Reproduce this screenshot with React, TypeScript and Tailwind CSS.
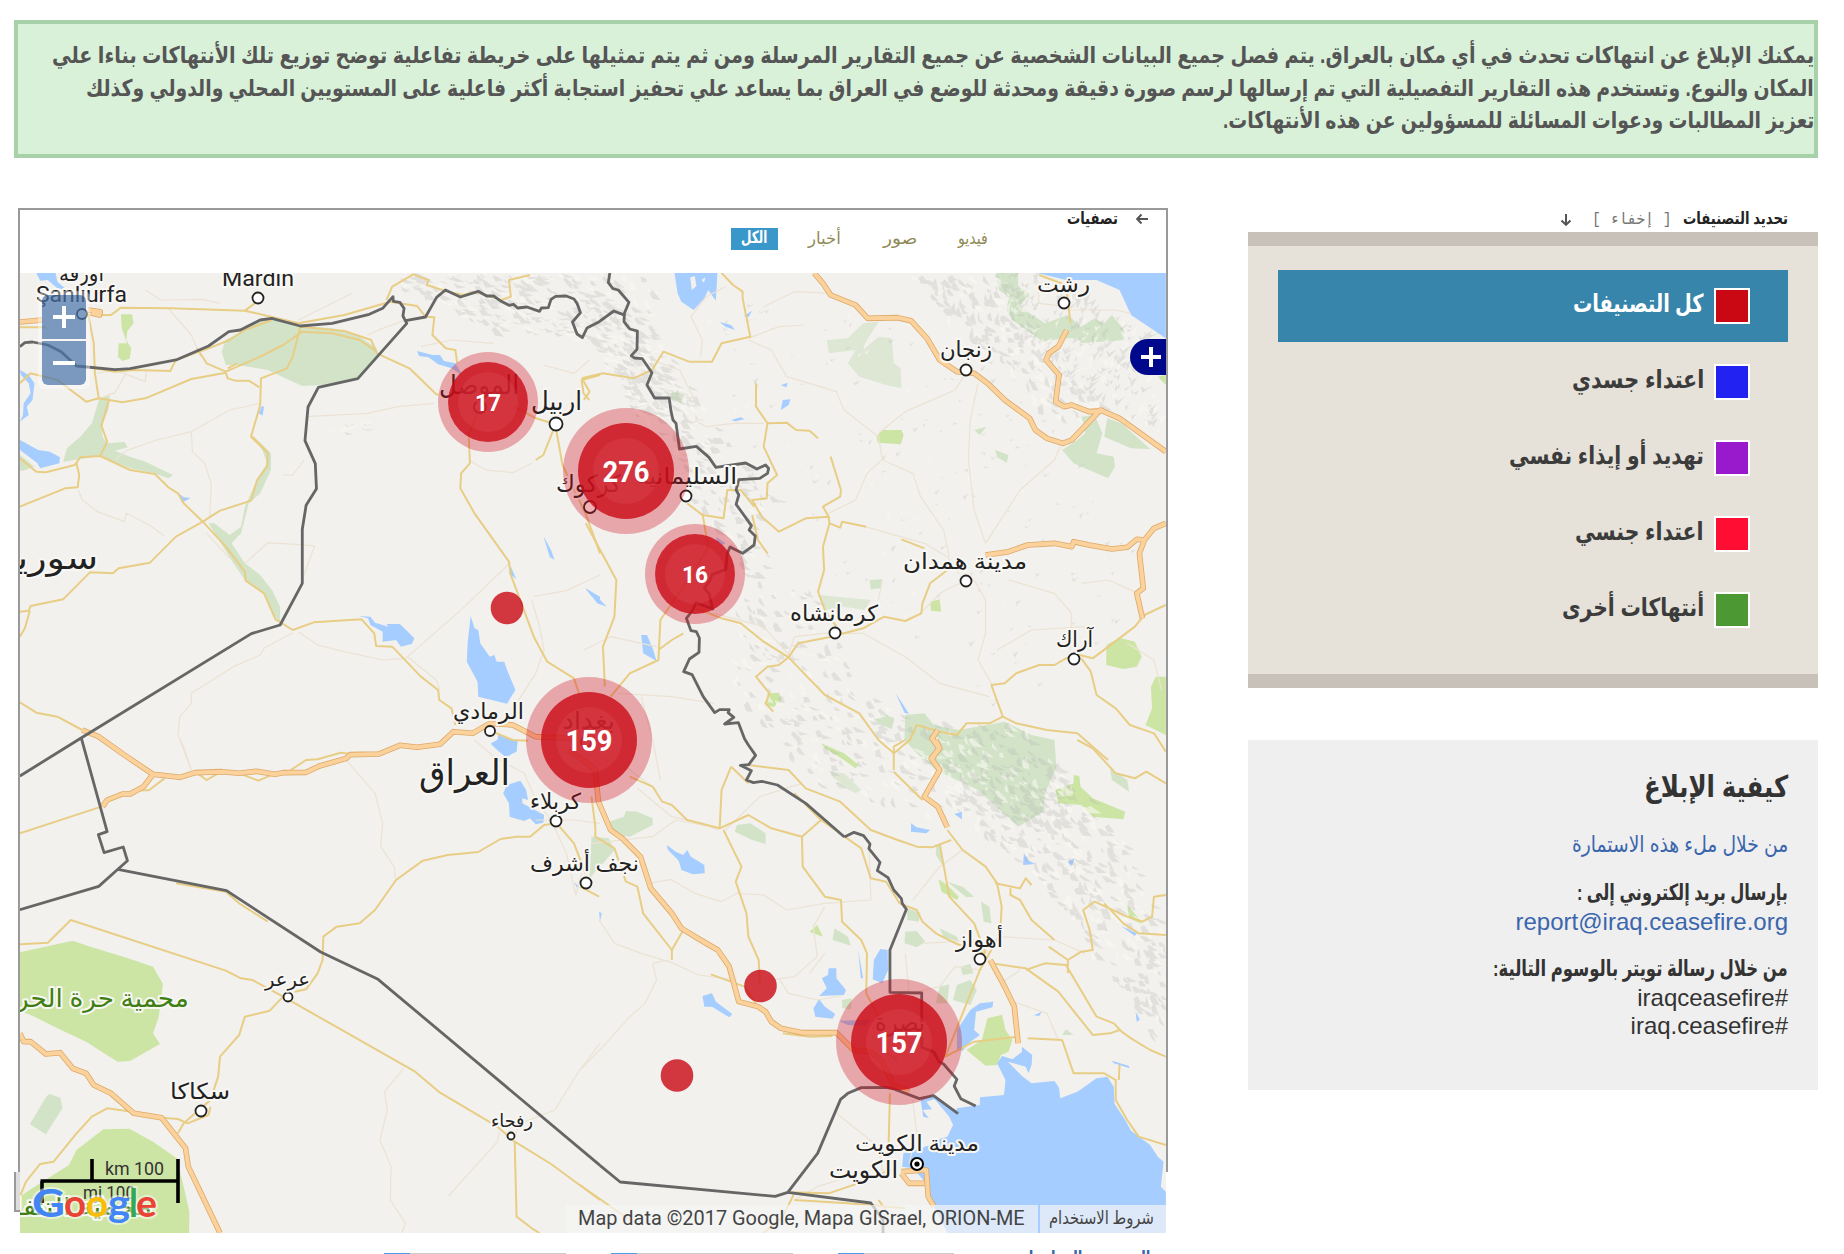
import { useLayoutEffect, useRef, useState } from "react";
import type { ReactNode } from "react";

type Quad = "a" | "b" | "c" | "d";

// The map is surveyed in four quadrants, each with its own local grid.
const frames: Record<Quad, string> = {
  a: "translate(0 260) scale(0.38265 0.33333)",
  b: "translate(580 260) scale(0.38265 0.33333)",
  c: "translate(0 740) scale(0.38265 0.33333)",
  d: "translate(580 740) scale(0.38265 0.33333)",
};

const FOREST = "#d2e3c8";
const PARK = "#cce5a5";
const WATER = "#a5cdff";

const areas: [Quad, string, string][] = [
  ["a", FOREST, "M710 176L785 198L870 205L940 230L985 265L985 290L935 356L850 374L790 378L740 352L700 330L620 315L590 315L579 275L590 240L640 208L680 182Z"],
  ["a", FOREST, "M260 415L287 406L283 450L265 500L268 530L280 550L325 546L334 562L300 572L340 590L380 605L452 645L440 655L400 638L340 625L300 606L262 588L205 598L165 606L175 565L210 530L240 490Z"],
  ["a", FOREST, "M678 545L708 580L708 630L680 700L650 730L630 820L605 850L640 910L680 945L712 992L732 1040L732 1085L712 1062L690 1000L640 960L610 910L545 790L560 790L600 825L630 800L640 740L675 650L698 610Z"],
  ["a", PARK, "M316 163L345 163L349 190L333 213L330 240L343 265L339 296L320 303L308 290L310 250L332 250L318 205Z"],
  ["a", FOREST, "M52 585L90 620L60 632L52 632Z"],
  ["a", WATER, "M95 39L145 39L150 65L175 90L150 85L125 60L105 62Z"],
  ["a", WATER, "M52 330L75 345L90 370L85 420L70 440L75 465L52 485L60 465L62 430L80 400L75 370L55 345Z"],
  ["a", WATER, "M52 540L100 570L130 575L157 592L155 610L105 625L98 610L52 570Z"],
  ["a", WATER, "M1090 273L1130 285L1150 285L1160 303L1190 310L1208 345L1180 325L1145 313L1120 292L1095 288Z"],
  ["a", WATER, "M1230 1068L1240 1105L1250 1110L1255 1150L1280 1190L1292 1185L1298 1205L1318 1205L1325 1230L1347 1290L1325 1331L1250 1310L1248 1265L1220 1205L1222 1150Z"],
  ["a", WATER, "M937 1068L968 1070L980 1088L1015 1100L1010 1092L1045 1092L1083 1135L1076 1152L1048 1160L1035 1140L1000 1145L1000 1115L968 1095L962 1075Z"],
  ["a", WATER, "M1283 1450L1300 1440L1303 1420L1325 1435L1352 1440L1350 1475L1320 1490L1290 1460Z"],
  ["a", WATER, "M1420 828L1440 870L1449 899L1437 892Z"],
  ["a", WATER, "M1335 920L1349 957L1330 940Z"],
  ["a", WATER, "M684 438L690 440L686 467L676 460Z"],
  ["a", WATER, "M467 700L480 712L498 714L475 728Z"],
  ["a", WATER, "M1530 985L1568 1010L1568 1020L1545 1008Z"],
  ["b", WATER, "M247 39L359 39L355 122L335 90L325 115L297 150L265 125L255 100Z"],
  ["b", "#f2f1ed", "M288 52L300 48L304 78L292 90ZM318 60L328 52L324 68Z"],
  ["b", WATER, "M1195 39L1270 60L1350 60L1410 90L1440 165L1531 235L1531 39Z"],
  ["b", FOREST, "M1087 39L1145 39L1145 80L1175 100L1150 140L1215 190L1275 165L1310 200L1345 175L1370 190L1390 165L1422 210L1420 240L1310 250L1300 235L1260 235L1210 245L1130 180L1115 150L1120 110L1095 90Z"],
  ["b", "#dde7d4", "M645 240L700 235L740 190L780 185L745 250L740 270L780 230L815 235L820 310L838 325L840 385L800 375L730 350L700 310L720 270L650 280Z"],
  ["b", PARK, "M790 510L840 510L846 525L838 553L778 548L775 530Z"],
  ["b", FOREST, "M1310 470L1345 465L1365 520L1350 580L1395 590L1398 620L1380 655L1290 610L1260 570L1300 540L1320 520Z"],
  ["b", FOREST, "M1378 475L1415 490L1490 567L1440 565L1370 530Z"],
  ["b", FOREST, "M240 390L270 405L265 430L235 415Z"],
  ["b", FOREST, "M1085 570L1120 585L1115 608L1090 592Z"],
  ["b", FOREST, "M1030 510L1062 500L1045 525Z"],
  ["b", FOREST, "M757 960L790 958L785 985L760 988Z"],
  ["b", PARK, "M915 1025L940 1018L944 1055L917 1052Z"],
  ["b", "#dde7d4", "M625 1005L760 1020L745 1050L690 1040L640 1050Z"],
  ["b", PARK, "M1376 1155L1410 1133L1450 1145L1468 1190L1455 1220L1420 1227L1375 1215Z"],
  ["b", PARK, "M1492 1280L1505 1250L1531 1250L1531 1425L1478 1395L1495 1345Z"],
  ["b", PARK, "M490 1300L520 1298L527 1320L505 1342L488 1335Z"],
  ["b", FOREST, "M850 1365L900 1360L925 1395L990 1410L1110 1385L1180 1425L1240 1440L1245 1520L1215 1600L1210 1655L1145 1700L1040 1590L930 1530L880 1480L848 1440Z"],
  ["b", FOREST, "M765 1380L800 1365L822 1375L815 1408L790 1395Z"],
  ["b", WATER, "M825 1300L842 1330L860 1362L848 1358Z"],
  ["b", WATER, "M160 1125L175 1125L190 1165L200 1203L165 1180Z"],
  ["b", WATER, "M530 420L550 418L545 435L525 450Z"],
  ["b", WATER, "M365 186L395 195L405 210L380 200Z"],
  ["b", WATER, "M395 480L420 472L430 478L405 484Z"],
  ["b", WATER, "M525 376L542 368L540 382Z"],
  ["b", WATER, "M15 985L40 1005L70 1040L45 1030Z"],
  ["b", WATER, "M428 168L450 152L440 172Z"],
  ["b", PARK, "M1510 350L1531 345L1531 375Z"],
  ["b", WATER, "M355 830L380 850L372 855L360 845Z"],
  ["c", PARK, "M52 637L190 602L230 618L335 655L400 680L426 732L415 830L400 880L418 912L340 963L307 965L225 905L150 865L90 830L52 812Z"],
  ["c", PARK, "M90 1340L180 1275L200 1230L270 1168L338 1166L400 1205L462 1255L480 1340L495 1415L494 1479L52 1479L52 1370Z"],
  ["c", FOREST, "M120 1072L128 1062L158 1073L163 1105L120 1183L78 1153Z"],
  ["c", WATER, "M1283 13L1300 0L1330 0L1353 5L1350 30L1330 48L1310 25Z"],
  ["c", WATER, "M1315 160L1325 135L1360 122L1375 150L1380 180L1365 175L1365 190L1422 225L1420 248L1400 253L1385 235L1370 243L1332 230L1330 190Z"],
  ["c", WATER, "M1500 425L1513 440L1508 443Z"],
  ["d", FOREST, "M30 290L75 295L90 330L60 370L25 415Z"],
  ["d", FOREST, "M75 245L115 230L120 213L150 215L190 235L190 255L130 290L90 285Z"],
  ["d", FOREST, "M410 255L445 250L485 280L485 312L450 300L405 275Z"],
  ["d", "#dde7d4", "M655 95L690 100L735 150L720 160L670 130Z"],
  ["d", PARK, "M630 10L690 40L728 75L720 85L690 60L640 25Z"],
  ["d", PARK, "M1242 150L1290 130L1290 105L1305 108L1308 140L1340 175L1425 215L1420 238L1340 230L1310 195L1250 190Z"],
  ["d", PARK, "M937 418L960 435L990 470L985 480L945 455Z"],
  ["d", PARK, "M1430 495L1460 535L1468 552L1435 535Z"],
  ["d", PARK, "M600 575L620 555L635 590Z"],
  ["d", PARK, "M1065 835L1103 824L1112 870L1130 900L1120 935L1100 945L1090 975L1060 977L1010 930L1050 900Z"],
  ["d", FOREST, "M855 505L890 520L885 545L855 540Z"],
  ["d", FOREST, "M850 575L880 573L902 605L880 622L848 610Z"],
  ["d", FOREST, "M960 425L1000 440L1030 470L1010 472Z"],
  ["d", FOREST, "M1048 485L1070 500L1075 550L1055 545Z"],
  ["d", FOREST, "M940 565L985 590L990 605L950 590Z"],
  ["d", FOREST, "M995 680L1020 672L1028 700L1000 705Z"],
  ["d", FOREST, "M940 740L965 733L960 790L930 790Z"],
  ["d", FOREST, "M985 735L1020 720L1037 750L1020 795L975 780Z"],
  ["d", FOREST, "M930 315L940 315L950 380L930 345Z"],
  ["d", FOREST, "M665 565L700 590L708 617L660 600Z"],
  ["d", FOREST, "M685 780L710 775L708 808L685 805Z"],
  ["d", FOREST, "M1385 85L1430 120L1435 155L1390 120Z"],
  ["d", FOREST, "M1260 885L1270 868L1290 885Z"],
  ["d", WATER, "M227 315L250 335L270 345L280 330L290 350L325 375L326 400L295 403L265 390L258 362L230 330Z"],
  ["d", WATER, "M768 660L785 627L804 630L805 690L790 730L765 718Z"],
  ["d", WATER, "M650 685L670 685L670 715L695 750L690 765L625 768L645 745L632 715L648 705Z"],
  ["d", WATER, "M610 805L625 778L640 800L667 822L660 836L615 830Z"],
  ["d", WATER, "M675 842L760 840L745 858L700 855Z"],
  ["d", WATER, "M320 768L345 760L355 785L398 822L390 832L345 800L325 800Z"],
  ["d", WATER, "M727 630L733 670L740 715L734 715Z"],
  ["d", WATER, "M985 930L985 870L1020 810L1045 790L1080 785L1078 802L1035 815L1030 870L1045 885L1020 905L1000 932Z"],
  ["d", WATER, "M865 250L880 262L915 270L905 280L865 275Z"],
  ["d", WATER, "M978 222L998 215L998 238Z"],
  ["d", WATER, "M1160 340L1172 362L1190 372L1158 375Z"],
  ["d", WATER, "M1275 365L1292 355L1285 382Z"],
  ["d", WATER, "M1186 826L1207 815L1200 828Z"],
  ["d", WATER, "M1414 558L1455 580L1450 588Z"],
  ["d", WATER, "M1390 962L1435 978L1435 984L1395 970Z"],
  ["d", WATER, "M1452 815L1463 838L1455 846Z"],
  ["d", WATER, "M50 515L57 520L52 545Z"],
  ["d", WATER, "M984 1105L1045 1095L1045 1072L1108 1065L1112 1020L1090 970L1103 948L1130 958L1155 935L1155 920L1182 945L1180 975L1172 1000L1165 980L1118 965L1155 1008L1180 1030L1240 1023L1252 1043L1255 1075L1300 1055L1350 1015L1378 1010L1395 1040L1397 1092L1425 1140L1440 1172L1490 1215L1510 1250L1525 1265L1518 1340L1531 1355L1531 1479L960 1479L925 1400L905 1330L870 1285L842 1280L845 1240L890 1225L915 1215L930 1200L960 1190L975 1155L965 1130L925 1075L985 1112Z"],
  ["d", WATER, "M890 1080L920 1062L940 1085L985 1120L925 1078L905 1085L920 1108L895 1110L912 1135L897 1130Z"],
];

const minor: [Quad, string][] = [
  ["a", "M440 145L500 225L515 265L525 290M255 340L300 330L380 365L382 335M255 418L300 398L330 340M680 430L600 450L500 515L410 540L330 572L300 600M500 515L503 575L535 610L552 670L548 770M205 690L215 720L255 755L325 785L330 760L390 795L430 828M540 820L600 895M640 910L700 848L810 856L822 858L795 945M740 645L765 645L795 600M800 470L960 460L1040 440L1135 430"],
  ["a", "M1330 912L1200 1055L1060 1195L1000 1200L900 1175L830 1155L780 1115M765 1118L690 1165L680 1185L610 1220L500 1300L500 1330L470 1370L465 1425L480 1460L500 1530M1395 1010L1480 992L1568 945M1390 1020L1410 1100L1422 1170L1400 1240L1350 1330M1065 1190L1140 1260L1150 1290M1225 600L1270 630L1340 638L1390 610M660 40L655 70L700 55M380 90L420 120L530 118L575 130M920 100L850 140L780 180M1060 180L1000 205L960 225M1100 260L1180 240L1290 250M1420 315L1500 340L1540 300"],
  ["b", "M380 80L330 110L290 170L320 240L315 290M440 235L520 200L585 195M440 240L500 270L540 350L600 370L670 395L690 450L780 530L790 598L750 640L720 720L650 760M790 600L870 640L890 710L950 810L965 890M1008 340L980 390L900 430L850 455L780 520M1040 370L1020 480L1015 600L1030 750L1060 850M1260 545L1240 600L1150 690L1060 850M745 800L900 850L960 890L990 940M1030 960L1060 1020L1060 1120L1040 1200L1080 1280M1010 960L940 1000L890 1060M790 960L780 1020M660 100L560 95L480 140M1280 1170L1285 1060L1240 1000L1120 960M550 1190L480 1100L350 1060M540 1200L560 1130L640 1120L740 1120L850 1190L940 1270L1070 1310"],
  ["b", "M1195 60L1200 130L1270 140M1270 150L1400 150L1440 160M10 1170L80 1130L200 1160M100 1300L240 1310L350 1330M160 1310L190 1440L210 1560M1090 1170L1180 1110L1320 1100M1430 1150L1500 1200L1520 1290M1310 970L1380 960L1460 1000M300 480L330 500L400 490L480 490M190 300L260 330L300 420"],
  ["c", "M470 0L500 90M905 60L980 160L1000 250L995 320L1030 380L1034 415M1055 985L1005 1055L1012 1110L993 1200L1022 1280L1020 1380L1060 1450L1050 1479M1305 1175L1300 1205L1172 1368M1345 1190L1360 1150L1450 1110L1515 990L1568 910M1240 0L1290 50L1370 100L1400 180L1440 240L1480 340L1505 465L1520 400M1400 240L1500 240L1568 250"],
  ["d", "M0 990L60 920L130 830L170 790L200 720L190 670L230 660M50 540L90 610L160 640L240 668L310 705L410 720M30 310L190 290L250 240L340 260M380 270L470 170L580 130M360 270L320 250L240 230L150 145M240 420L300 460L370 485L410 460L480 465L540 510L640 490L760 480L755 300M180 430L240 418M640 500L610 560L620 650L560 710L500 720M520 715L545 760L620 780L680 768M870 480L940 380L1000 330M900 610L1030 600L1070 640M850 640L860 760L940 740L980 680L1050 690M1150 690L1100 730L1120 780L1220 820L1250 900M1100 590L1240 600L1320 640M600 700L640 640M820 760L870 780L900 830M670 1120L780 1220L790 1290M870 1080L880 1180L860 1270M560 1380L620 1340L760 1290L820 1290M20 40L120 80L200 150"],
];

const roads: [Quad, string][] = [
  ["a", "M52 202L120 202M225 165L290 165L316 143L445 145L640 152L780 190L900 165L1020 125L1090 138L1112 170L1135 172L1130 225L1165 265L1190 270L1195 310M640 152L690 110M785 200L900 213L970 240L985 280L1070 325L1140 403L1175 408M1010 120L1025 80L1080 43L1120 60L1115 75L1170 95L1210 105L1240 95L1310 120L1335 110L1330 60L1385 45M230 160L245 250L248 340L258 415L225 425L150 360L80 340L52 370M460 298L445 333L350 330L300 335L225 320M710 180L640 210L600 240L545 265L460 300M515 265L540 310L590 335L680 290L740 255L790 215L868 220L940 240L985 275M258 415L320 427L380 415L500 357L590 338M785 200L765 290L750 325L682 355L680 435L656 530L700 580L698 620L672 660L656 722L575 752L530 785L460 830L392 908L310 925L295 940L235 937L165 1018L80 1038L75 1052L52 1055"],
  ["a", "M590 338L595 355L615 362L650 362L678 382M595 325L620 310M660 530L698 575M285 420L265 497L280 545L262 588L340 630L405 642L440 682L465 700L480 730L530 785L590 860L640 935L642 962L690 1000L720 1078L765 1110L820 1087L945 1078L978 1120L983 1158L1025 1160L1100 1250L1145 1290L1148 1320L1180 1345L1190 1395M262 588L210 592L195 615L120 637L95 635L52 595M200 610L207 645L203 682L170 685L52 740M78 1052L65 1105L52 1130M52 1327L95 1358L150 1370L215 1410M1245 470L1225 520L1228 610L1205 640L1203 685L1240 760L1330 905L1335 945L1395 1130L1430 1205L1500 1255L1513 1300M1345 440L1400 475L1452 493L1420 585L1400 600M1452 500L1470 615L1530 760L1568 880M1568 345L1520 360L1525 400L1540 420M1255 1400L1340 1440L1380 1442"],
  ["b", "M370 39L400 75L425 95L425 115L445 230L370 250L345 305L285 305L218 275L188 330L140 355L60 340L5 355M5 355L25 395L10 420M460 370L460 440L490 490L480 560L515 645L490 670L488 715L450 720L475 770L520 815L590 775L650 770L635 740L680 710L682 690L655 590M490 490L540 488L565 510L600 512L622 535M280 730L320 765L375 775L385 690L420 690L455 740M450 765L465 840L490 880M650 770L652 790L680 803L685 785L748 800M652 790L635 860L638 930L622 995L640 1050L670 1100M545 1192L570 1150L650 1132L740 1105L795 1070L850 1083L892 1060L895 1030L915 970L960 930M305 1045L370 1075L420 1090L480 1145L545 1192L640 1305L730 1360L780 1440L820 1480M545 1192L520 1215L490 1220L460 1250L495 1300L485 1330L505 1355"],
  ["b", "M15 790L95 960L90 1070L60 1160L65 1280M320 760L335 860L300 930L210 1080L205 1200L130 1240L80 1310M205 1170L240 1140L270 1120M840 838L900 865M1531 1035L1475 1065L1450 1100L1340 1195L1305 1185L1270 1195L1240 1215L1200 1215L1140 1240L1110 1270L1075 1275L1105 1370L1140 1390L1220 1410L1300 1420L1340 1460L1380 1500M1310 1195L1335 1235L1350 1305L1400 1345L1437 1395L1500 1420L1531 1475M1105 1370L1070 1390L1010 1390L985 1425L940 1415L880 1395L862 1440L820 1480M1200 45L1270 75L1282 190"],
  ["c", "M52 280L265 200M360 152L390 150L430 115M760 90L800 60L830 58L890 38L920 42M510 95L540 120L570 100L625 100L675 122L720 100M52 613L125 608L185 540L590 692L630 715L660 720L740 770L1085 995L1150 1058L1300 1160L1345 1205L1440 1272L1568 1380M770 755L800 748L830 700L843 660L845 590L880 560L940 550L980 510L1035 420L1105 362L1170 345L1250 336L1308 297L1350 290L1385 290L1422 255L1455 250M460 430L590 455L625 490L700 545M740 770L705 812L640 830L625 885L575 950L570 1010L550 1080L480 1150L465 1180M425 1133L465 1137L490 1150L545 1125L550 1100M1345 1205L1350 1430L1390 1465L1410 1479M52 1370L68 1325L105 1272L140 1265L200 1180L240 1130L280 1105L345 1115M1455 250L1500 310L1530 400"],
  ["d", "M0 440L50 470M0 1335L130 1440M30 170L40 260L40 290L90 325L120 425L150 440L165 520L240 630L240 660M240 630L270 570M395 80L370 150L365 265L280 240L240 195L215 185L190 140L130 110M395 80L440 130M440 75L545 90L590 145L680 185L760 270L830 300L880 320L920 322L970 300M365 265L440 225L500 265L580 290L630 240L560 160M375 270L422 380L407 425L435 520L440 590L467 660L470 730M580 290L582 380L640 470L682 480L685 545L735 600L750 640L748 760L780 830M630 240L735 325L760 415L800 425L835 490L880 510L895 545L930 580L985 612L1060 640M342 703L430 740L465 800M530 880L600 890L660 888M940 310L965 470L1030 550L1060 640M960 270L1000 330L1060 380L1090 430L1102 500L1098 580L1070 640L1045 690L955 950L1030 905L1145 890"],
  ["d", "M1085 430L1150 445L1165 415L1180 435M1125 445L1125 465L1150 480L1180 540L1240 600M820 90L820 20L850 0M820 95L895 180M1225 620L1275 660L1310 635L1340 630L1332 570L1315 510L1345 485L1430 530L1470 545L1495 530L1500 470L1531 465M1370 490L1420 550L1460 580L1531 585M1075 670L1165 685L1250 755L1340 885L1385 880L1410 870L1440 895L1490 930L1531 950M1165 690L1215 670L1270 675L1350 830L1395 850L1420 880M1275 660L1275 700M1170 895L1260 900L1290 1000L1370 1000L1400 1020L1400 1080L1430 1140L1460 1190L1531 1215M1410 975L1408 1020M1300 0L1340 25L1400 100L1450 115L1480 95L1531 130M790 930L830 960M810 1060L805 1280M545 1357L650 1360L740 1325L810 1290M560 1380L700 1390L850 1405M560 1360L530 1430L480 1479M780 1380L800 1410"],
];

const highways: [Quad, string][] = [
  ["a", "M52 186L110 180M230 150L262 155L260 165L240 160"],
  ["b", "M612 39L635 70L655 105L720 135L752 175L830 173L865 182L907 235L940 300L985 335L1030 340L1065 370L1110 420L1175 475L1190 510L1220 535L1262 550L1285 540L1360 450L1410 475L1531 575M1272 210L1250 260L1225 280L1218 300L1252 345L1243 425L1265 440L1285 435L1330 455L1370 452M1060 885L1120 875L1170 855L1240 850L1285 860L1290 845L1330 855L1390 867L1430 862L1455 838L1475 840L1500 805L1531 790M1475 840L1462 880L1472 985L1455 1000L1470 1075M935 1410L920 1435L938 1465L918 1500"],
  ["c", "M215 -30L258 -10L325 45L400 103L470 112L510 98L580 95L625 100L670 94L718 103L740 98L800 97L835 78L905 55L915 44L990 42L1045 16L1090 22L1150 13L1185 -25L1235 -20L1280 -50L1340 -45L1400 -10L1500 -5M400 103L375 140L340 162L320 162L280 180L268 200M52 880L62 905L80 905L120 942L157 938L190 985L225 1000L245 1035L290 1060L350 1120L422 1133L485 1225L492 1280L575 1479"],
  ["d", "M-30 30L20 70L40 90L48 185L80 270L110 295L158 350L185 445L240 520L265 565L315 600L360 630L390 680L415 785L465 800L485 815L500 845L525 865L580 878L670 878L715 930L760 935L790 965L820 1035L860 1055M930 0L940 25L918 55L940 90L900 170L935 200L960 262M1072 660L1110 740L1135 800L1145 910M840 1295L905 1290L910 1370L925 1400M840 1300L860 1330L900 1330"],
];

const borders: [Quad, string][] = [
  ["a", "M52 260L65 248L85 246L125 255L160 275L200 318L300 329L340 326L460 300L545 258L598 215L628 210L680 180L710 175L785 198L868 190L965 163L1000 145L1027 110L1028 124L1045 127L1056 145L1053 168L1063 190L935 356L832 382L805 441L797 542L824 611L827 686L800 736L790 808L790 970L732 1095L657 1121L212 1434L52 1548"],
  ["a", "M1060 182L1112 171L1141 112L1164 90L1203 111L1250 94L1272 108L1290 108L1310 124L1330 136L1342 133L1353 144L1377 141L1410 154L1415 144L1433 143L1440 118L1452 109L1480 108L1500 117L1508 130L1517 158L1496 186L1508 222L1522 233L1534 204L1566 185L1604 153L1634 166"],
  ["b", "M78 39L74 68L86 86L100 90L128 127L116 160L115 185L130 207L150 213L149 268L134 287L142 294L163 296L188 338L175 375L195 414L233 414L238 455L243 480L251 490L260 567L304 559L337 592L355 622L380 618L433 609L462 627L485 615L493 625L490 640L470 655L415 659L408 690L415 705L408 733L448 797L442 810L458 828L455 855L425 880L392 861L385 880L381 928L345 944L340 960L325 985L337 1000L347 1047L303 1028L295 1050L278 1075L290 1112L304 1115L312 1134L311 1177L286 1197L271 1235L293 1244L322 1310L352 1358L365 1349L390 1349L387 1358L402 1372L378 1392L414 1388L430 1436L440 1455L459 1486L441 1514L419 1516L448 1532L435 1560L453 1568L475 1564L516 1575L590 1630L691 1731"],
  ["c", "M212 -8L280 275L257 284L272 338L322 321L333 362L308 388L258 439L52 509M308 388L592 452L838 636L988 718L1568 1276"],
  ["d", "M691 291L716 277L741 287L758 312L755 326L784 367L777 392L805 413L820 450L840 476L842 490L853 508L810 630L810 757L893 759L893 922L925 936L938 965L950 972L985 1018L978 1038L995 1076L1034 1098M988 1121L924 1067L887 1076L820 1047L800 1042L735 1043L700 1060L681 1078L621 1240L543 1357L510 1369L105 1326L52 1276M543 1357L760 1389L792 1440L792 1479"],
];

// Mountain ranges: outline in map units, number of relief facets, ridge angle and facet size.
const ranges: { poly: [number, number][]; count: number; angle: number; size: number }[] = [
  { poly: [[395, 273], [590, 273], [690, 400], [640, 420], [590, 340], [500, 330], [400, 290]], count: 420, angle: 20, size: 1 },
  { poly: [[590, 273], [650, 273], [660, 340], [720, 430], [780, 500], [740, 560], [690, 500], [660, 440], [600, 330]], count: 300, angle: 40, size: 0.9 },
  { poly: [[1000, 273], [1080, 290], [1166, 350], [1166, 440], [1080, 400], [1010, 330]], count: 240, angle: -50, size: 1 },
  { poly: [[910, 273], [1000, 273], [1060, 360], [1110, 410], [1060, 420], [960, 330]], count: 220, angle: 55, size: 0.9 },
  { poly: [[740, 530], [800, 570], [860, 680], [960, 760], [1060, 770], [1080, 880], [960, 820], [820, 790], [730, 680]], count: 380, angle: 45, size: 0.9 },
  { poly: [[920, 720], [1020, 720], [1120, 830], [1166, 930], [1160, 1050], [1100, 960], [1040, 880], [960, 810]], count: 460, angle: 50, size: 1 },
  { poly: [[680, 300], [1000, 330], [1100, 480], [1160, 600], [1000, 720], [850, 600], [750, 450]], count: 230, angle: -40, size: 0.6 },
  { poly: [[330, 425], [370, 420], [365, 430], [328, 436]], count: 14, angle: -10, size: 1 },
];

function inside(x: number, y: number, poly: [number, number][]) {
  let hit = false;
  for (let i = 0, j = poly.length - 1; i < poly.length; j = i++) {
    const [xi, yi] = poly[i];
    const [xj, yj] = poly[j];
    if (yi > y !== yj > y && x < ((xj - xi) * (y - yi)) / (yj - yi) + xi) hit = !hit;
  }
  return hit;
}

function relief() {
  let seed = 7;
  const rnd = () => (seed = (seed * 16807) % 2147483647) / 2147483647;
  let dark = "";
  let light = "";
  for (const { poly, count, angle, size } of ranges) {
    const xs = poly.map((p) => p[0]);
    const ys = poly.map((p) => p[1]);
    const x0 = Math.min(...xs);
    const y0 = Math.min(...ys);
    const w = Math.max(...xs) - x0;
    const h = Math.max(...ys) - y0;
    for (let n = 0; n < count; ) {
      const x = x0 + rnd() * w;
      const y = y0 + rnd() * h;
      if (!inside(x, y, poly)) continue;
      n++;
      const a = ((angle + (rnd() - 0.5) * 60) * Math.PI) / 180;
      const l = (4 + rnd() * 11) * size;
      const t = (1 + rnd() * 5) * size;
      const dx = Math.cos(a) * l;
      const dy = Math.sin(a) * l;
      const s = `M${x.toFixed(1)} ${y.toFixed(1)}l${dx.toFixed(1)} ${dy.toFixed(1)}l${(-dx * 0.4 - t).toFixed(1)} ${(-dy * 0.3 + t * 0.4).toFixed(1)}l${(-dx * 0.4).toFixed(1)} ${(-dy * 0.1 - t).toFixed(1)}z`;
      if (rnd() > 0.35) dark += s;
      else light += s;
    }
  }
  return { dark, light };
}
const shade = relief();

type Label = { text: string; x0: number; x1: number; y: number; size: number; color?: string };
const labels: Label[] = [
  { text: "محميّة التنفا", x0: 14, x1: 152, y: 1215, size: 24, color: "#3f7f12" },
  { text: "اورفه", x0: 59, x1: 104, y: 281, size: 21 },
  { text: "Şanlıurfa", x0: 36, x1: 127, y: 302, size: 22 },
  { text: "Mardin", x0: 222, x1: 294, y: 286, size: 22 },
  { text: "الموصل", x0: 439, x1: 519, y: 394, size: 26 },
  { text: "اربيل", x0: 531, x1: 582, y: 410, size: 26 },
  { text: "كركوك", x0: 556, x1: 621, y: 492, size: 24 },
  { text: "السليمانية", x0: 636, x1: 737, y: 484, size: 22 },
  { text: "رشت", x0: 1037, x1: 1090, y: 292, size: 22 },
  { text: "زنجان", x0: 940, x1: 992, y: 357, size: 22 },
  { text: "مدينة همدان", x0: 903, x1: 1027, y: 569, size: 22 },
  { text: "كرمانشاه", x0: 790, x1: 878, y: 621, size: 22 },
  { text: "آراك", x0: 1056, x1: 1093, y: 647, size: 22 },
  { text: "سوريا", x0: 6, x1: 98, y: 569, size: 32 },
  { text: "الرمادي", x0: 453, x1: 524, y: 719, size: 22 },
  { text: "العراق", x0: 419, x1: 510, y: 785, size: 35 },
  { text: "بغداد", x0: 562, x1: 615, y: 729, size: 24 },
  { text: "كربلاء", x0: 530, x1: 581, y: 809, size: 22 },
  { text: "نجف أشرف", x0: 530, x1: 639, y: 871, size: 22 },
  { text: "أهواز", x0: 956, x1: 1003, y: 947, size: 22 },
  { text: "عرعر", x0: 265, x1: 310, y: 986, size: 19 },
  { text: "سكاكا", x0: 170, x1: 230, y: 1099, size: 22 },
  { text: "رفحاء", x0: 491, x1: 533, y: 1127, size: 18 },
  { text: "بصرة", x0: 875, x1: 925, y: 1031, size: 24 },
  { text: "مدينة الكويت", x0: 855, x1: 979, y: 1151, size: 22 },
  { text: "الكويت", x0: 829, x1: 898, y: 1178, size: 24 },
  { text: "محمية حرة الحر", x0: 16, x1: 189, y: 1007, size: 25, color: "#3f7f12" },
];

const towns: [number, number, number][] = [
  [82, 314, 5], [258, 298, 5.5], [480, 407, 6], [556, 424, 6.5], [590, 507, 6], [686, 496, 5.5],
  [1064, 303, 5.5], [966, 370, 5.5], [966, 581, 5.5], [835, 633, 5.5], [1074, 659, 5.5], [490, 731, 5],
  [586, 742, 5], [556, 821, 5.5], [586, 883, 5.5], [980, 959, 5.5], [288, 997, 4.5], [201, 1111, 5.5], [511, 1136, 3.5],
];

const clusters: [number, number, number, string][] = [
  [488, 402, 50, "17"], [626, 471, 63, "276"], [695, 574, 50, "16"], [589, 740, 63, "159"], [899, 1042, 63, "157"],
];
const dots: [number, number][] = [[507, 608], [760.5, 986], [677, 1075.5]];

const logo: [string, string, number, number][] = [
  ["G", "#4285f4", 32, 33], ["o", "#ea4335", 64, 22], ["o", "#fbbc05", 86, 22],
  ["g", "#4285f4", 108, 22], ["l", "#34a853", 129, 9], ["e", "#ea4335", 136, 21],
];

function Lines({ data, color, width }: { data: [Quad, string][]; color: string; width: number }) {
  return (
    <g fill="none" stroke={color} strokeWidth={width} strokeLinejoin="round">
      {data.map(([q, d], i) => (
        <path key={i} d={d} transform={frames[q]} vectorEffect="non-scaling-stroke" />
      ))}
    </g>
  );
}

function MapDrawing() {
  return (
    <svg className="block h-[960px] w-[1146px] [direction:ltr]" viewBox="20 273 1146 960">
      <rect x="20" y="273" width="1146" height="960" fill="#f2f1ed" />
      {areas.map(([q, c, d], i) => (
        <path key={i} d={d} fill={c} transform={frames[q]} />
      ))}
      <path d={shade.light} fill="#faf9f1" opacity="0.6" />
      <path d={shade.dark} fill="#b0afac" opacity="0.25" />
      <Lines data={minor} color="#ece2d4" width={1.2} />
      <Lines data={roads} color="#e8cd85" width={2} />
      <Lines data={highways} color="#dda968" width={5.6} />
      <Lines data={highways} color="#fcd29c" width={4} />
      <Lines data={borders} color="#666666" width={2.8} />
      {towns.map(([x, y, r]) => (
        <circle key={`${x}-${y}`} cx={x} cy={y} r={r} fill="#fff" stroke="#222" strokeWidth="1.8" />
      ))}
      <circle cx="917" cy="1164" r="6" fill="#fff" stroke="#000" strokeWidth="2" />
      <circle cx="917" cy="1164" r="2.6" />
      {labels.map((l) => (
        <text
          key={l.text}
          x={(l.x0 + l.x1) / 2}
          y={l.y}
          fontSize={l.size}
          fill={l.color ?? "#222"}
          textAnchor="middle"
          textLength={l.x1 - l.x0}
          lengthAdjust="spacingAndGlyphs"
          stroke="#f8f7f4"
          strokeWidth="4"
          strokeLinejoin="round"
          paintOrder="stroke"
          className="font-[Roboto,'DejaVu_Sans',sans-serif]"
        >
          {l.text}
        </text>
      ))}
      {clusters.map(([x, y, r, n]) => (
        <g key={n}>
          <circle cx={x} cy={y} r={r} fill="#d00a18" opacity="0.32" />
          <circle cx={x} cy={y} r={r === 50 ? 40 : 48} fill="#cb0e1a" opacity="0.82" />
          <circle cx={x} cy={y} r={r === 50 ? 30 : 33} fill="#e05a64" opacity="0.22" />
          <text
            x={x}
            y={y + (r === 50 ? 8.5 : 10.5)}
            fontSize={r === 50 ? 24.5 : 29}
            fontWeight="700"
            textAnchor="middle"
            textLength={r === 50 ? 26 : 47}
            lengthAdjust="spacingAndGlyphs"
            fill="#fff"
            className="font-[Roboto,sans-serif]"
          >
            {n}
          </text>
        </g>
      ))}
      {dots.map(([x, y]) => (
        <circle key={x} cx={x} cy={y} r="16.3" fill="#cb0e1a" opacity="0.82" />
      ))}
      <path d="M92 1159V1181M40.5 1181H179.5M178 1159V1203M42 1181V1203" fill="none" stroke="#000" strokeWidth="3.6" />
      <g fontSize="19" fill="#333" className="font-[Roboto,sans-serif]">
        <text x="105" y="1175" textLength="59" lengthAdjust="spacingAndGlyphs">km 100</text>
        <text x="83" y="1198.5" textLength="52" lengthAdjust="spacingAndGlyphs">mi 100</text>
      </g>
      {logo.map(([ch, color, x, w]) => (
        <text
          key={x}
          x={x}
          y="1217"
          fontSize="39"
          textLength={w}
          lengthAdjust="spacingAndGlyphs"
          fill={color}
          stroke="#fff"
          strokeOpacity="0.5"
          strokeWidth="4"
          paintOrder="stroke"
          className="font-[Lato,sans-serif] font-bold"
        >
          {ch}
        </text>
      ))}
    </svg>
  );
}

// One line of text, squeezed or stretched horizontally to an exact width.
function Fit({ w, className = "", ltr, children }: { w: number; className?: string; ltr?: boolean; children: ReactNode }) {
  const ref = useRef<HTMLSpanElement>(null);
  const [scale, setScale] = useState(1);
  useLayoutEffect(() => {
    if (ref.current) setScale(w / ref.current.offsetWidth);
  }, [w]);
  return (
    <span className={`inline-block whitespace-nowrap ${className}`} style={{ width: w }}>
      <span
        ref={ref}
        dir={ltr ? "ltr" : "rtl"}
        className="inline-block origin-right"
        style={{ transform: `scaleX(${scale})` }}
      >
        {children}
      </span>
    </span>
  );
}

function Arrow({ className }: { className: string }) {
  return (
    <svg className={className} width="12" height="12" viewBox="0 0 12 12" fill="none" stroke="#555" strokeWidth="2">
      <path d="M12 6H2M5.5 1.5L1.2 6L5.5 10.5" />
    </svg>
  );
}

const categories: [string, string, number][] = [
  ["كل التصنيفات", "bg-[#c90813]", 131],
  ["اعتداء جسدي", "bg-[#2222f2]", 132],
  ["تهديد أو إيذاء نفسي", "bg-[#9919cc]", 195],
  ["اعتداء جنسي", "bg-[#ff0d33]", 129],
  ["أنتهاكات أخرى", "bg-[#4c9933]", 142],
];

export default function App() {
  return (
    <div dir="rtl" className="flex h-[1254px] w-[1844px] flex-col overflow-hidden bg-white pt-5 font-['Liberation_Sans','DejaVu_Sans',sans-serif] text-[#333]">
      <div className="mr-[26px] flex h-[138px] w-[1804px] flex-col border-4 border-[#a7d1a9] bg-[#d9f1d9] pt-[15px] text-[23px] leading-[32.5px] font-bold text-[#555]">
        <Fit w={1762}>يمكنك الإبلاغ عن انتهاكات تحدث في أي مكان بالعراق. يتم فصل جميع البيانات الشخصية عن جميع التقارير المرسلة ومن ثم يتم تمثيلها على خريطة تفاعلية توضح توزيع تلك الأنتهاكات بناءا علي</Fit>
        <Fit w={1728}>المكان والنوع. وتستخدم هذه التقارير التفصيلية التي تم إرسالها لرسم صورة دقيقة ومحدثة للوضع في العراق بما يساعد علي تحفيز استجابة أكثر فاعلية على المستويين المحلي والدولي وكذلك</Fit>
        <Fit w={591}>تعزيز المطالبات ودعوات المسائلة للمسؤولين عن هذه الأنتهاكات.</Fit>
      </div>

      <div className="mt-[50px] mr-[26px] flex w-[1804px] justify-between">
        <aside className="w-[570px]">
          <div className="flex h-6 items-center pr-[30px] text-[16.5px] leading-5">
            <Fit w={105} className="mb-1 font-bold text-[#222]">تحديد التصنيفات</Fit>
            <Fit w={80} className="mr-[11px] font-['Liberation_Mono','DejaVu_Sans_Mono',monospace] text-[16px] text-[#777]">[ إخفاء ]</Fit>
            <Arrow className="mr-[20px] -rotate-90" />
          </div>
          <div className="flex h-[456px] flex-col gap-1 border-y-[14px] border-[#c7c1ba] bg-[#e6e2da] px-[30px] pt-6">
            {categories.map(([name, color, w], i) => (
              <div key={name} className={i === 0 ? "flex h-[72px] shrink-0 items-center gap-[10px] bg-[#3885ab] pr-[38px] text-white" : "flex h-[72px] shrink-0 items-center gap-[10px] pr-[38px] text-[#3c3c3c]"}>
                <span className={`h-9 w-9 border-2 border-white ${color}`} />
                <Fit w={w} className="mb-1 text-[25px] font-bold">{name}</Fit>
              </div>
            ))}
          </div>
          <div className="mt-[52px] h-[350px] bg-[#efefef] px-[30px] pt-[28px] text-[22.5px] leading-7">
            <h2 className="h-10 text-[30px] leading-[38px] font-bold"><Fit w={144}>كيفية الإبلاغ</Fit></h2>
            <p className="mt-[23px] h-7 text-[#3a66ad]"><Fit w={216}>من خلال ملء هذه الاستمارة</Fit></p>
            <p className="mt-[20px] h-7 font-bold"><Fit w={211}>بإرسال بريد إلكتروني إلى :</Fit></p>
            <p className="mt-px h-7 text-[24px] text-[#3a66ad]"><Fit ltr w={272}>report@iraq.ceasefire.org</Fit></p>
            <p className="mt-[19px] h-7 font-bold"><Fit w={295}>من خلال رسالة تويتر بالوسوم التالية:</Fit></p>
            <p className="mt-px h-7 text-[24px]"><Fit ltr w={151}>iraqceasefire#</Fit></p>
            <p className="h-7 text-[24px]"><Fit ltr w={157}>iraq.ceasefire#</Fit></p>
          </div>
        </aside>

        <main className="relative ml-1 h-[1025px] w-[1150px]">
          <div className="h-[964px] border-x-2 border-t-2 border-[#999]">
            <div className="flex h-[18px] items-center gap-[18px] pr-[18px] text-[16.5px] leading-[18px]">
              <Arrow className="" />
              <Fit w={51} className="mb-0.5 font-bold text-[#222]">تصفيات</Fit>
            </div>
            <div className="flex h-[22px] items-center pr-[178px] text-[17px] leading-[22px] text-[#8f8a55]">
              <Fit w={30} className="ml-[41px]">فيديو</Fit>
              <Fit w={34} className="ml-[42px]">صور</Fit>
              <Fit w={33} className="ml-[30px]">أخبار</Fit>
              <span className="flex h-[22px] w-[47px] items-center justify-center bg-[#3a97c9] font-bold text-white"><Fit w={26} className="mb-0.5">الكل</Fit></span>
            </div>
            <div className="relative mt-[23px] h-[960px] w-[1146px]">
              <MapDrawing />
              <div className="absolute top-[18px] left-[18px] flex flex-col gap-0.5 rounded-md bg-white/40 p-1 text-white">
                <div className="flex h-11 w-11 items-center justify-center rounded-t-md bg-[#003c88]/50">
                  <svg width="22" height="22" viewBox="0 0 22 22"><path d="M11 0V22M0 11H22" stroke="#fff" strokeWidth="4" /></svg>
                </div>
                <div className="flex h-11 w-11 items-center justify-center rounded-b-md bg-[#003c88]/50">
                  <svg width="22" height="22" viewBox="0 0 22 22"><path d="M0 11H22" stroke="#fff" strokeWidth="4" /></svg>
                </div>
              </div>
              <div className="absolute top-[66px] right-0 flex h-9 w-9 items-center justify-center rounded-l-[18px] bg-[#00088b]">
                <svg width="20" height="20" viewBox="0 0 20 20" className="ml-[5px]"><path d="M10 0V20M0 10H20" stroke="#fff" strokeWidth="4" /></svg>
              </div>
              <div className="absolute right-0 bottom-0 flex h-7 gap-0.5 font-[Roboto,'DejaVu_Sans',sans-serif] text-[20px] leading-[26px] text-[#444]">
                <span className="w-[126px] bg-[#f5f5f5]/70 pr-3 text-[18px]"><Fit w={105}>شروط الاستخدام</Fit></span>
                <span className="w-[472px] bg-[#f5f5f5]/70 pr-[13px]"><Fit ltr w={447}>Map data ©2017 Google, Mapa GISrael, ORION-ME</Fit></span>
              </div>
            </div>
          </div>
          <div className="absolute top-[964px] left-[-4px] h-10 w-1.5 border-b-2 border-l-2 border-[#999] bg-[#ddd]" />
        </main>
      </div>

      <div className="flex h-[21px] shrink-0 overflow-hidden pt-[13px] pr-[694px] text-[18px] leading-6 text-[#3a66ad]">
        <Fit w={135} className="font-bold">التحديث و المعلومات</Fit>
        <div className="mt-[7px] mr-[61px] flex h-px gap-[45px]">
          <span className="w-[116px] border-l-[26px] border-[#4f9be6] bg-[#ccc]" />
          <span className="w-[182px] border-l-[26px] border-[#4f9be6] bg-[#ccc]" />
          <span className="w-[182px] border-l-[26px] border-[#4f9be6] bg-[#ccc]" />
        </div>
      </div>
    </div>
  );
}
